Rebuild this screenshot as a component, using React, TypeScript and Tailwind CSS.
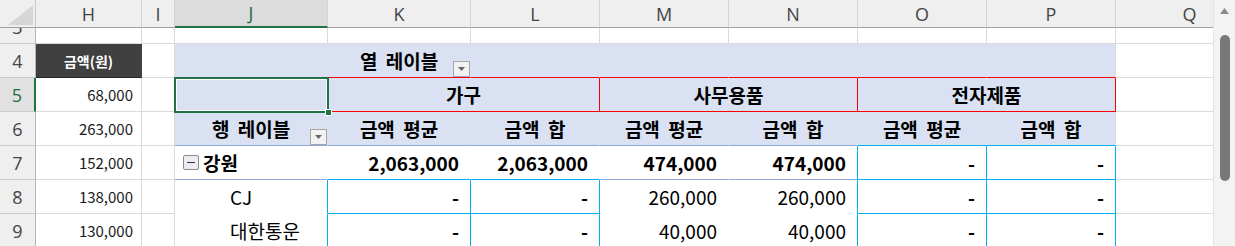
import React from "react";

const base = "relative flex items-center border-r border-b whitespace-nowrap";
const grid = "border-r-[#dadada] border-b-[#dadada] bg-white";
const rh =
  "justify-center bg-[#efefef] text-[#444] border-r-[#b5b5b5] border-b-[#cacaca] font-['Open_Sans',sans-serif] text-[18px] leading-none";
const ch =
  "justify-center bg-[#efefef] text-[#444] border-r-[#d4d4d4] border-b-[#a0a0a0] font-['Open_Sans',sans-serif] text-[18px] leading-none";
const lav = "bg-[#d9e1f2]";
const ko = "font-['Noto_Sans_CJK_KR',sans-serif] text-black text-[19px] leading-none [word-spacing:4px]";
const bold = "font-bold";
const num = "justify-end pr-[11px] text-[18px]";
const hnum =
  "justify-end pr-[8px] text-[15px] leading-none font-['Noto_Sans_CJK_KR',sans-serif] text-[#1a1a1a]";
const cy = "border-[#00b0f0]";

function C({ c = "", children }: { c?: string; children?: React.ReactNode }) {
  return <div className={`${base} ${c}`}>{children}</div>;
}

function Drop() {
  return (
    <span className="absolute right-0 bottom-0 z-10 flex h-[16px] w-[17px] items-center justify-center border border-[#a6a6a6] bg-[#f2f2f2]">
      <svg width="7" height="4" viewBox="0 0 7 4">
        <path d="M0 0H7L3.5 4Z" fill="#666" />
      </svg>
    </span>
  );
}

function Minus() {
  return (
    <span className="mr-[4px] flex h-[15px] w-[16px] items-center justify-center rounded-[2px] border border-[#8c8c8c] bg-[#ececf2]">
      <span className="h-[1px] w-[8px] bg-[#333]" />
    </span>
  );
}

export default function App() {
  return (
    <div className="flex h-[246px] w-[1235px] overflow-hidden bg-white">
      <div className="h-[246px] w-[1213px] overflow-hidden">
        <div className="grid grid-cols-[36px_106px_33px_153px_143px_129px_129px_129px_129px_129px_148px] grid-rows-[28px_16px_34px_34px_34px_34px_34px_34px]">
          {/* column headers */}
          <C c="items-end justify-end bg-[#efefef] border-r-[#c8c8c8] border-b-[#a0a0a0] pr-[2px] pb-[2px]">
            <svg width="25" height="20" viewBox="0 0 25 20">
              <path d="M0 20H25V0Z" fill="#d6d6d6" />
            </svg>
          </C>
          <C c={ch}>H</C>
          <C c={ch}>I</C>
          <C c="justify-center bg-[#dcdcdc] text-[#1e6b40] border-r-[#d4d4d4] border-b-2 border-b-[#217346] font-['Open_Sans',sans-serif] text-[18px] leading-none">
            J
          </C>
          <C c={ch}>K</C>
          <C c={ch}>L</C>
          <C c={ch}>M</C>
          <C c={ch}>N</C>
          <C c={ch}>O</C>
          <C c={ch}>P</C>
          <C c={ch}>Q</C>

          {/* row 3 (partially visible) */}
          <div className="relative flex flex-col justify-end overflow-hidden border-r border-b border-r-[#b5b5b5] border-b-[#cacaca] bg-[#efefef]">
            <div className="flex h-[33px] shrink-0 items-center justify-center font-['Open_Sans',sans-serif] text-[18px] leading-none text-[#444]">
              3
            </div>
          </div>
          <C c={grid} />
          <C c={grid} />
          <C c={grid} />
          <C c={grid} />
          <C c={grid} />
          <C c={grid} />
          <C c={grid} />
          <C c={grid} />
          <C c={grid} />
          <C c={grid} />

          {/* row 4 */}
          <C c={rh}>4</C>
          <C c="justify-center bg-[#404040] border-r-[#404040] border-b-[#262626] font-['Noto_Sans_CJK_KR',sans-serif] text-[14px] font-bold leading-none text-white">
            금액(원)
          </C>
          <C c={grid} />
          <C c={`${lav} border-r-[#d9e1f2] border-b-[#d9e1f2]`} />
          <C c={`${lav} ${ko} ${bold} justify-center border-r-[#d9e1f2] border-b-[#ff0000]`}>
            열 레이블
            <Drop />
          </C>
          <C c={`${lav} border-r-[#d9e1f2] border-b-[#ff0000]`} />
          <C c={`${lav} border-r-[#d9e1f2] border-b-[#ff0000]`} />
          <C c={`${lav} border-r-[#d9e1f2] border-b-[#ff0000]`} />
          <C c={`${lav} border-r-[#d9e1f2] border-b-[#ff0000]`} />
          <C c={`${lav} border-r-[#dadada] border-b-[#ff0000]`} />
          <C c={grid} />

          {/* row 5 */}
          <C c="justify-center bg-[#e1e1e1] text-[#1e6b40] border-r-2 border-r-[#217346] border-b-[#cacaca] font-['Open_Sans',sans-serif] text-[18px] leading-none">
            5
          </C>
          <C c={`${grid} ${hnum}`}>68,000</C>
          <C c={grid} />
          <C c={`${lav} border-r-[#ff0000] border-b-[#d9e1f2]`}>
            <div className="absolute top-[-1px] left-[-1px] z-20 h-[36px] w-[155px] border-2 border-[#217346] shadow-[inset_0_0_0_1px_#ffffff]">
              <div className="absolute right-[-5px] bottom-[-5px] h-[7px] w-[7px] border border-white bg-[#217346]" />
            </div>
          </C>
          <C c={`col-span-2 ${lav} ${ko} ${bold} justify-center border-r-[#ff0000] border-b-[#ff0000]`}>가구</C>
          <C c={`col-span-2 ${lav} ${ko} ${bold} justify-center border-r-[#ff0000] border-b-[#ff0000]`}>사무용품</C>
          <C c={`col-span-2 ${lav} ${ko} ${bold} justify-center border-r-[#ff0000] border-b-[#ff0000]`}>전자제품</C>
          <C c={grid} />

          {/* row 6 */}
          <C c={rh}>6</C>
          <C c={`${grid} ${hnum}`}>263,000</C>
          <C c={grid} />
          <C c={`${lav} ${ko} ${bold} justify-center border-r-[#d9e1f2] border-b-[#8ea9db]`}>
            행 레이블
            <Drop />
          </C>
          <C c={`${lav} ${ko} ${bold} justify-center border-r-[#d9e1f2] border-b-[#8ea9db]`}>금액 평균</C>
          <C c={`${lav} ${ko} ${bold} justify-center border-r-[#d9e1f2] border-b-[#8ea9db]`}>금액 합</C>
          <C c={`${lav} ${ko} ${bold} justify-center border-r-[#d9e1f2] border-b-[#8ea9db]`}>금액 평균</C>
          <C c={`${lav} ${ko} ${bold} justify-center border-r-[#d9e1f2] border-b-[#8ea9db]`}>금액 합</C>
          <C c={`${lav} ${ko} ${bold} justify-center border-r-[#d9e1f2] border-b-[#00b0f0]`}>금액 평균</C>
          <C c={`${lav} ${ko} ${bold} justify-center border-r-[#dadada] border-b-[#00b0f0]`}>금액 합</C>
          <C c={grid} />

          {/* row 7 */}
          <C c={rh}>7</C>
          <C c={`${grid} ${hnum}`}>152,000</C>
          <C c={grid} />
          <C c={`bg-white ${ko} ${bold} pl-[8px] border-r-white border-b-[#8ea9db]`}>
            <Minus />
            강원
          </C>
          <C c={`bg-white ${ko} ${bold} ${num} border-r-white border-b-[#00b0f0]`}>2,063,000</C>
          <C c={`bg-white ${ko} ${bold} ${num} border-r-white border-b-[#00b0f0]`}>2,063,000</C>
          <C c={`bg-white ${ko} ${bold} ${num} border-r-white border-b-[#8ea9db]`}>474,000</C>
          <C c={`bg-white ${ko} ${bold} ${num} border-r-[#00b0f0] border-b-[#8ea9db]`}>474,000</C>
          <C c={`bg-white ${ko} ${bold} ${num} ${cy}`}>-</C>
          <C c={`bg-white ${ko} ${bold} ${num} ${cy}`}>-</C>
          <C c={grid} />

          {/* row 8 */}
          <C c={rh}>8</C>
          <C c={`${grid} ${hnum}`}>138,000</C>
          <C c={grid} />
          <C c={`bg-white ${ko} pl-[55px] border-r-[#00b0f0] border-b-white`}>CJ</C>
          <C c={`bg-white ${ko} ${bold} ${num} ${cy}`}>-</C>
          <C c={`bg-white ${ko} ${bold} ${num} ${cy}`}>-</C>
          <C c={`bg-white ${ko} ${num} border-r-white border-b-white`}>260,000</C>
          <C c={`bg-white ${ko} ${num} border-r-[#00b0f0] border-b-white`}>260,000</C>
          <C c={`bg-white ${ko} ${bold} ${num} ${cy}`}>-</C>
          <C c={`bg-white ${ko} ${bold} ${num} ${cy}`}>-</C>
          <C c={grid} />

          {/* row 9 */}
          <C c={rh}>9</C>
          <C c={`${grid} ${hnum}`}>130,000</C>
          <C c={grid} />
          <C c={`bg-white ${ko} pl-[55px] border-r-[#00b0f0] border-b-white`}>대한통운</C>
          <C c={`bg-white ${ko} ${bold} ${num} ${cy}`}>-</C>
          <C c={`bg-white ${ko} ${bold} ${num} ${cy}`}>-</C>
          <C c={`bg-white ${ko} ${num} border-r-white border-b-white`}>40,000</C>
          <C c={`bg-white ${ko} ${num} border-r-[#00b0f0] border-b-white`}>40,000</C>
          <C c={`bg-white ${ko} ${bold} ${num} ${cy}`}>-</C>
          <C c={`bg-white ${ko} ${bold} ${num} ${cy}`}>-</C>
          <C c={grid} />
        </div>
      </div>

      {/* vertical scrollbar */}
      <div className="flex h-[246px] w-[22px] flex-col items-center border-l border-[#e3e3e3] bg-[#f3f3f3]">
        <svg className="mt-[8px]" width="9" height="6" viewBox="0 0 9 6">
          <path d="M0 6H9L4.5 0Z" fill="#8a8a8a" />
        </svg>
        <div className="mt-[21px] h-[146px] w-[10px] rounded-full bg-[#787878]" />
      </div>
    </div>
  );
}
